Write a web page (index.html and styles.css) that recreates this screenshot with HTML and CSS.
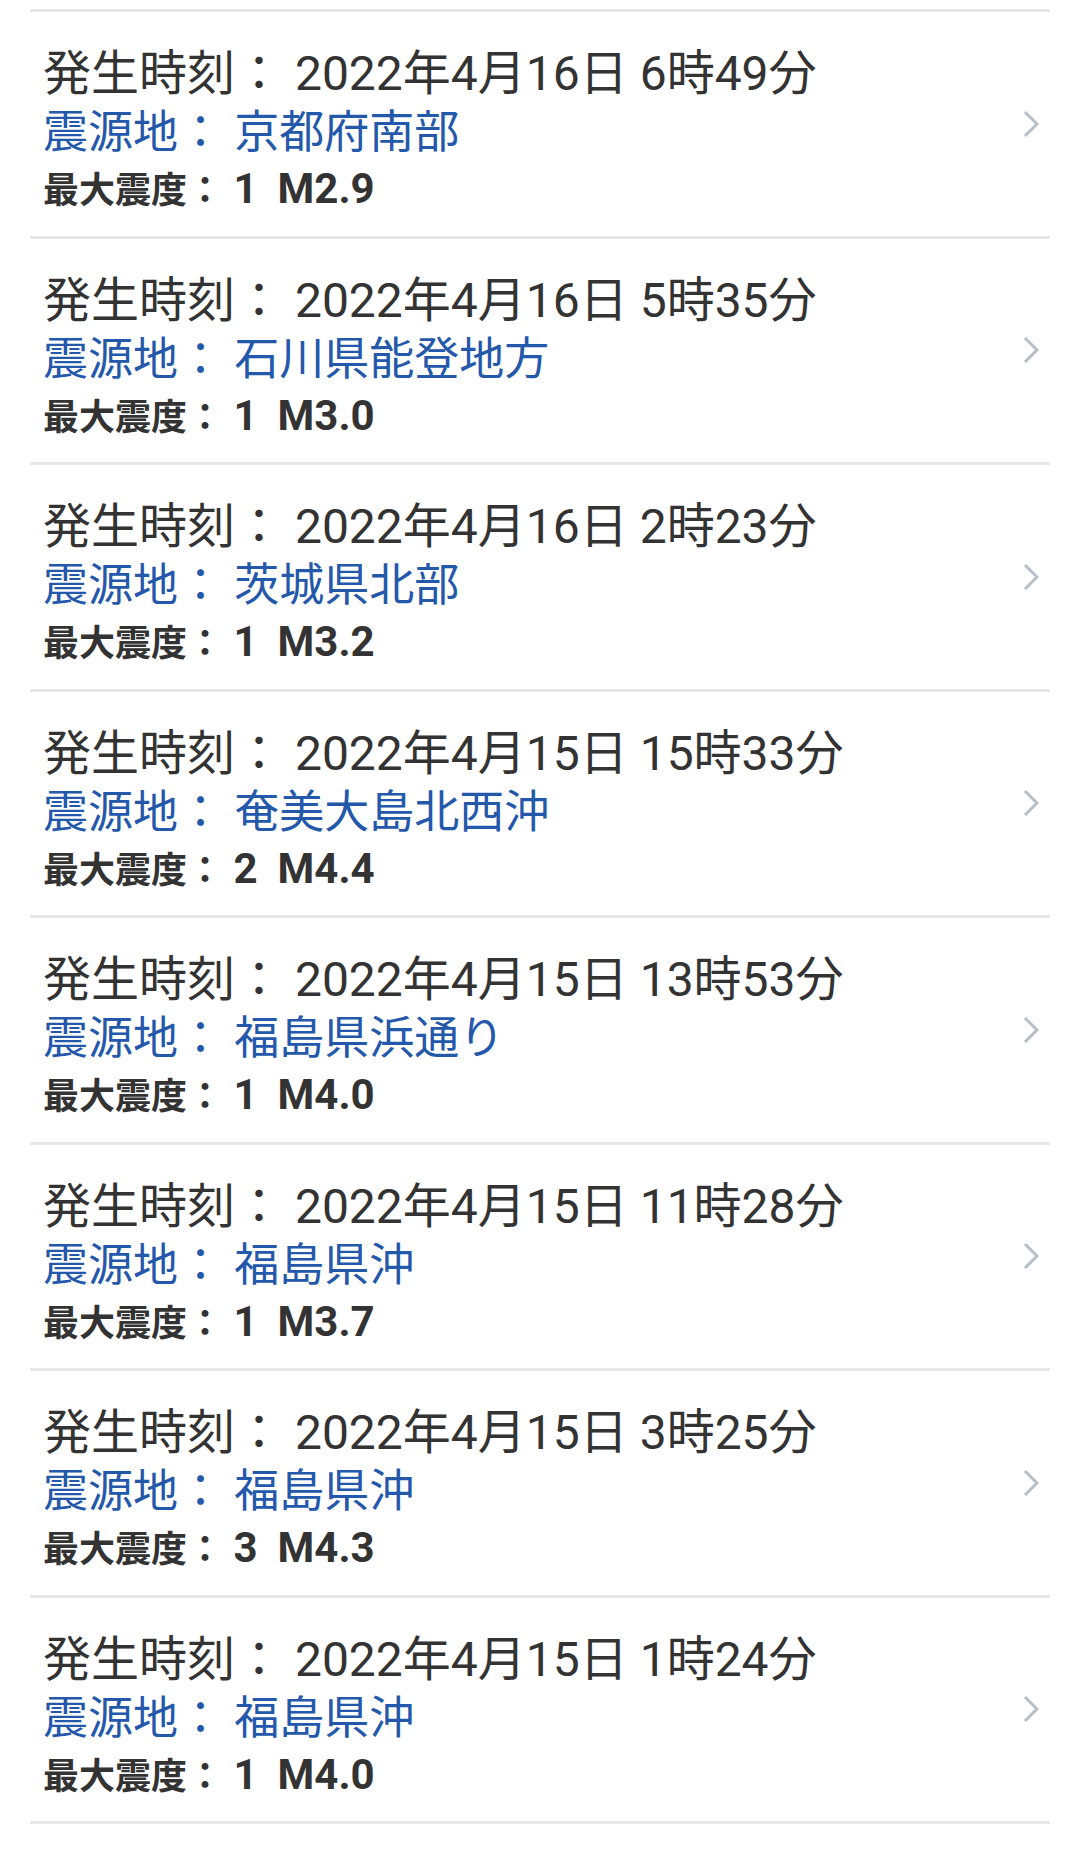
FILE: index.html
```html
<!DOCTYPE html>
<html lang="ja">
<head>
    <meta charset="UTF-8">
    <meta name="viewport" content="width=device-width, initial-scale=1.0">
    <title>地震情報</title>
    <link rel="stylesheet" href="styles.css">
</head>

<body>

    <div class="quake-list">

        <!-- 地震情報 -->
        <a class="quake-item" href="#">
            <div class="quake-info">
                <p class="quake-time">発生時刻： 2022年4月16日 6時49分</p>
                <p class="quake-place">震源地： 京都府南部</p>
                <p class="quake-scale">最大震度：<span class="value"> 1<span class="mag">M2.9</span></span></p>
            </div>
            <svg class="chevron" viewBox="0 0 16 28"><path d="M2 2 L14 14 L2 26"/></svg>
        </a>

        <a class="quake-item" href="#">
            <div class="quake-info">
                <p class="quake-time">発生時刻： 2022年4月16日 5時35分</p>
                <p class="quake-place">震源地： 石川県能登地方</p>
                <p class="quake-scale">最大震度：<span class="value"> 1<span class="mag">M3.0</span></span></p>
            </div>
            <svg class="chevron" viewBox="0 0 16 28"><path d="M2 2 L14 14 L2 26"/></svg>
        </a>

        <a class="quake-item" href="#">
            <div class="quake-info">
                <p class="quake-time">発生時刻： 2022年4月16日 2時23分</p>
                <p class="quake-place">震源地： 茨城県北部</p>
                <p class="quake-scale">最大震度：<span class="value"> 1<span class="mag">M3.2</span></span></p>
            </div>
            <svg class="chevron" viewBox="0 0 16 28"><path d="M2 2 L14 14 L2 26"/></svg>
        </a>

        <a class="quake-item" href="#">
            <div class="quake-info">
                <p class="quake-time">発生時刻： 2022年4月15日 15時33分</p>
                <p class="quake-place">震源地： 奄美大島北西沖</p>
                <p class="quake-scale">最大震度：<span class="value"> 2<span class="mag">M4.4</span></span></p>
            </div>
            <svg class="chevron" viewBox="0 0 16 28"><path d="M2 2 L14 14 L2 26"/></svg>
        </a>

        <a class="quake-item" href="#">
            <div class="quake-info">
                <p class="quake-time">発生時刻： 2022年4月15日 13時53分</p>
                <p class="quake-place">震源地： 福島県浜通り</p>
                <p class="quake-scale">最大震度：<span class="value"> 1<span class="mag">M4.0</span></span></p>
            </div>
            <svg class="chevron" viewBox="0 0 16 28"><path d="M2 2 L14 14 L2 26"/></svg>
        </a>

        <a class="quake-item" href="#">
            <div class="quake-info">
                <p class="quake-time">発生時刻： 2022年4月15日 11時28分</p>
                <p class="quake-place">震源地： 福島県沖</p>
                <p class="quake-scale">最大震度：<span class="value"> 1<span class="mag">M3.7</span></span></p>
            </div>
            <svg class="chevron" viewBox="0 0 16 28"><path d="M2 2 L14 14 L2 26"/></svg>
        </a>

        <a class="quake-item" href="#">
            <div class="quake-info">
                <p class="quake-time">発生時刻： 2022年4月15日 3時25分</p>
                <p class="quake-place">震源地： 福島県沖</p>
                <p class="quake-scale">最大震度：<span class="value"> 3<span class="mag">M4.3</span></span></p>
            </div>
            <svg class="chevron" viewBox="0 0 16 28"><path d="M2 2 L14 14 L2 26"/></svg>
        </a>

        <a class="quake-item" href="#">
            <div class="quake-info">
                <p class="quake-time">発生時刻： 2022年4月15日 1時24分</p>
                <p class="quake-place">震源地： 福島県沖</p>
                <p class="quake-scale">最大震度：<span class="value"> 1<span class="mag">M4.0</span></span></p>
            </div>
            <svg class="chevron" viewBox="0 0 16 28"><path d="M2 2 L14 14 L2 26"/></svg>
        </a>

    </div>

</body>

</html>
```

FILE: styles.css
```css
/* General Styles */
body {
    font-family: Roboto, 'Noto Sans CJK JP', sans-serif;
    background: #fff;
    color: #333;
    margin: 0;
    padding: 0;
}

.quake-list {
    padding: 9px 30px 0;
}

.quake-item {
    display: flex;
    align-items: flex-start;
    height: 223.5px;
    border-top: 3px solid #e6e6e6;
    text-decoration: none;
    color: inherit;
}

.quake-item:last-child {
    border-bottom: 3px solid #e6e6e6;
}

.quake-info {
    flex: 1;
    padding: 30px 0 0 13px;
}

.quake-info p {
    margin: 0;
}

.quake-time {
    font-size: 48px;
    line-height: 64px;
    color: #333;
}

.quake-place {
    font-size: 45px;
    line-height: 54px;
    color: #2458ab;
}

.quake-scale {
    font-size: 36px;
    line-height: 58px;
    font-weight: bold;
    color: #333;
}

.value {
    font-size: 42px;
}

.mag {
    margin-left: 20px;
}

/* 右矢印 */
.chevron {
    align-self: center;
    width: 16px;
    height: 28px;
    margin-right: 11px;
    fill: none;
    stroke: #b5bec9;
    stroke-width: 3;
}
```
